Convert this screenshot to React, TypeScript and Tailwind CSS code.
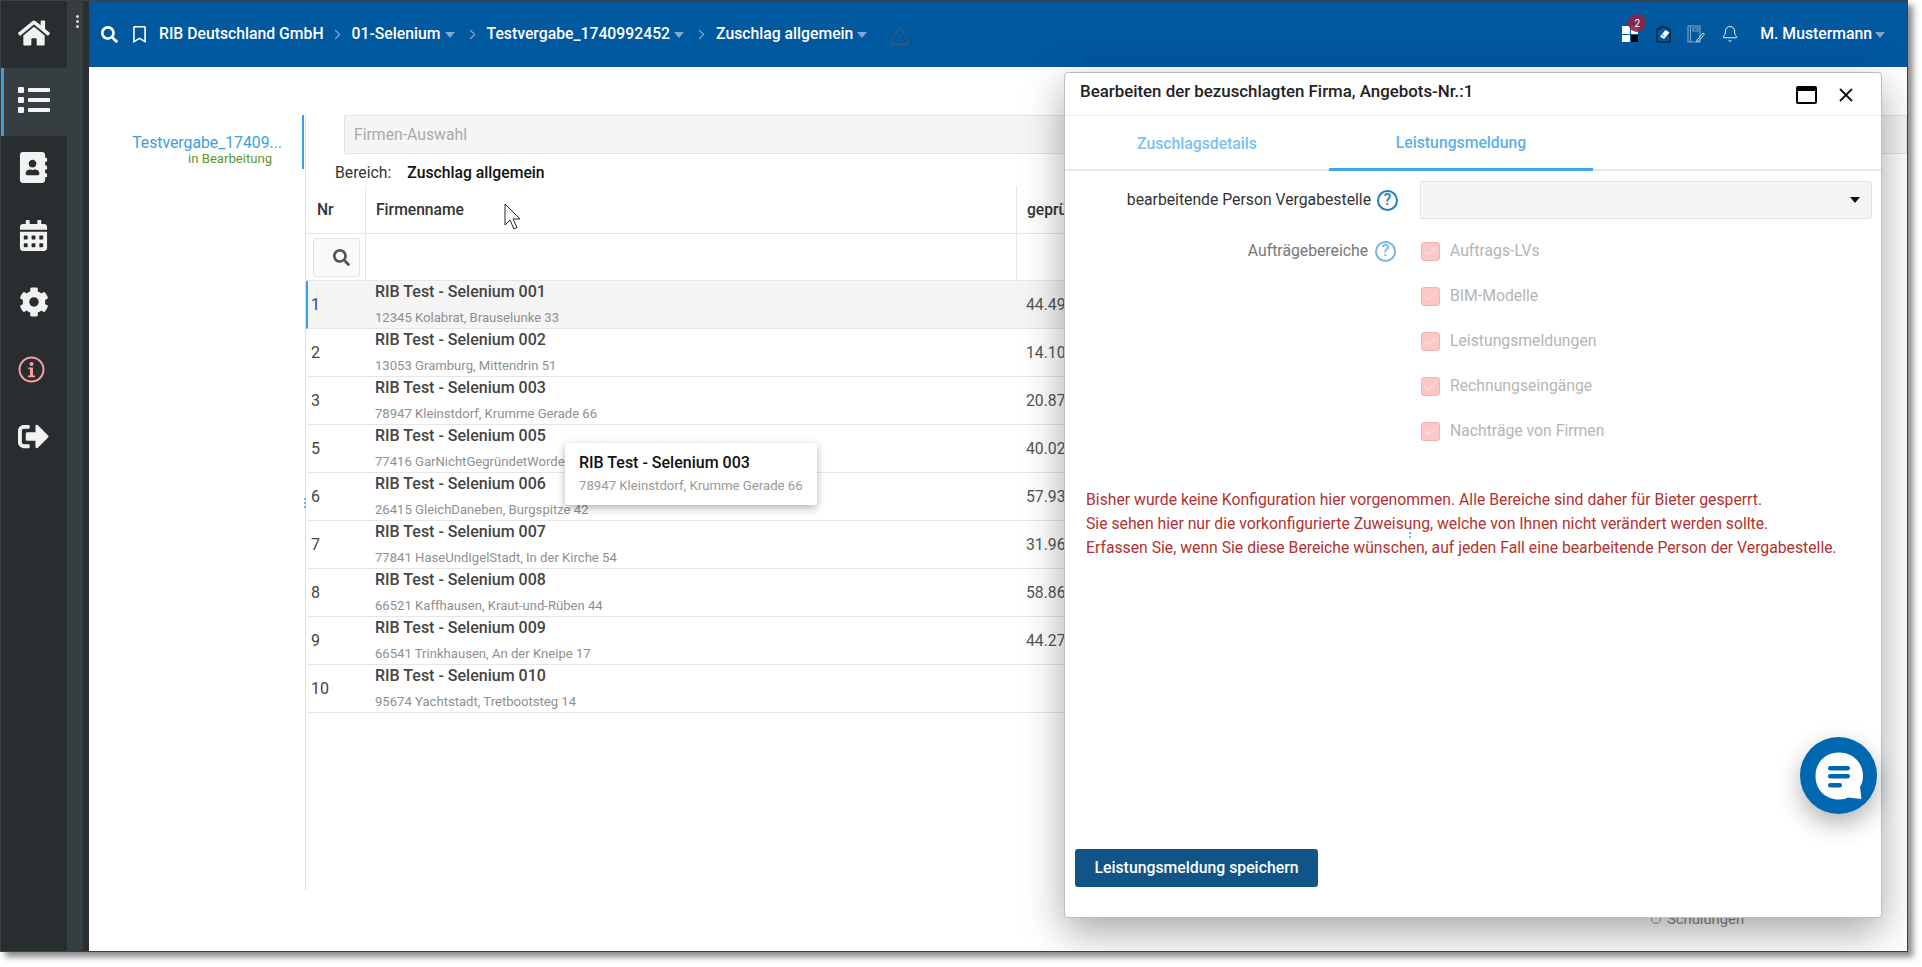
import React from "react";
import { FaHome, FaList, FaAddressBook, FaCalendarAlt, FaCog, FaSignOutAlt, FaSearch, FaRegBookmark } from "react-icons/fa";
import { Bell, TriangleAlert, X, ChevronRight, Check } from "lucide-react";

const rows = [
  ["1", "RIB Test - Selenium 001", "12345 Kolabrat, Brauselunke 33", "44.49"],
  ["2", "RIB Test - Selenium 002", "13053 Gramburg, Mittendrin 51", "14.10"],
  ["3", "RIB Test - Selenium 003", "78947 Kleinstdorf, Krumme Gerade 66", "20.87"],
  ["5", "RIB Test - Selenium 005", "77416 GarNichtGegründetWorde", "40.02"],
  ["6", "RIB Test - Selenium 006", "26415 GleichDaneben, Burgspitze 42", "57.93"],
  ["7", "RIB Test - Selenium 007", "77841 HaseUndIgelStadt, In der Kirche 54", "31.96"],
  ["8", "RIB Test - Selenium 008", "66521 Kaffhausen, Kraut-und-Rüben 44", "58.86"],
  ["9", "RIB Test - Selenium 009", "66541 Trinkhausen, An der Kneipe 17", "44.27"],
  ["10", "RIB Test - Selenium 010", "95674 Yachtstadt, Tretbootsteg 14", ""],
];

const checks = ["Auftrags-LVs", "BIM-Modelle", "Leistungsmeldungen", "Rechnungseingänge", "Nachträge von Firmen"];

function Caret({ className = "" }: { className?: string }) {
  return (
    <svg width="10" height="6" viewBox="0 0 10 6" className={className}>
      <path d="M0 0h10L5 6z" fill="#7fa9cc" />
    </svg>
  );
}

function Sep({ className = "" }: { className?: string }) {
  return <ChevronRight size={17} strokeWidth={1.5} color="#7fa9cc" className={className} />;
}

function Help({ faded = false }: { faded?: boolean }) {
  return (
    <div
      className={`flex h-[21px] w-[21px] shrink-0 items-center justify-center rounded-full border-2 text-[16px] font-medium leading-none ${
        faded ? "border-[#7db5dc] text-[#7db5dc]" : "border-[#1f7fc0] text-[#1f7fc0]"
      }`}
    >
      ?
    </div>
  );
}

function Dots({ className = "" }: { className?: string }) {
  return (
    <div className={`absolute flex flex-col gap-[2px] ${className}`}>
      <span className="h-[2px] w-[2px] rounded-full bg-[#3aa0ea]" />
      <span className="h-[2px] w-[2px] rounded-full bg-[#3aa0ea]" />
      <span className="h-[2px] w-[2px] rounded-full bg-[#3aa0ea]" />
    </div>
  );
}

function RailItem({ children, active = false }: { children: React.ReactNode; active?: boolean }) {
  return (
    <div
      className={`flex h-[67.3px] items-center justify-center pb-[3px] ${
        active ? "border-l-[3px] border-[#3aa0dc] bg-[#373e42] pr-[4px]" : "pr-[1px]"
      }`}
    >
      {children}
    </div>
  );
}

function Rail() {
  return (
    <aside className="flex w-[88px] shrink-0 bg-[#282d30] text-[#f2f2f2]">
      <div className="w-[66px] shrink-0">
        <RailItem><FaHome size={32} /></RailItem>
        <RailItem active><FaList size={32} /></RailItem>
        <RailItem><FaAddressBook size={31} /></RailItem>
        <RailItem><FaCalendarAlt size={31} /></RailItem>
        <RailItem><FaCog size={30} /></RailItem>
        <RailItem>
          <svg width="27" height="27" viewBox="0 0 27 27" className="mr-[4px]">
            <circle cx="13.5" cy="13.5" r="12" fill="none" stroke="#f8a0a0" strokeWidth="2" />
            <circle cx="13.5" cy="8" r="2" fill="#f8a0a0" />
            <path d="M10.5 11.5h4.5v8h2v1.8h-7v-1.8h2v-6.2h-1.5z" fill="#f8a0a0" />
          </svg>
        </RailItem>
        <RailItem><FaSignOutAlt size={31} /></RailItem>
      </div>
      <div className="flex w-[16px] shrink-0 flex-col items-center gap-[2px] bg-[#373e42] pl-[5px] pt-[14px]">
        <span className="h-[3px] w-[3px] rounded-full bg-[#d8d8d8]" />
        <span className="h-[3px] w-[3px] rounded-full bg-[#d8d8d8]" />
        <span className="h-[3px] w-[3px] rounded-full bg-[#d8d8d8]" />
      </div>
      <div className="w-[6px] shrink-0 bg-[#2b2f33]" />
    </aside>
  );
}

function Header() {
  return (
    <header className="flex h-[66px] shrink-0 items-center bg-[#00589f] text-[15.75px] font-medium text-white">
      <FaSearch size={17} className="ml-[12px]" />
      <FaRegBookmark size={17} className="ml-[13px]" />
      <span className="ml-[11px]">RIB Deutschland GmbH</span>
      <Sep className="ml-[5px]" />
      <span className="ml-[6px]">01-Selenium</span>
      <Caret className="ml-[4px] mt-[2px]" />
      <Sep className="ml-[9px]" />
      <span className="ml-[6px]">Testvergabe_1740992452</span>
      <Caret className="ml-[4px] mt-[2px]" />
      <Sep className="ml-[9px]" />
      <span className="ml-[6px]">Zuschlag allgemein</span>
      <Caret className="ml-[4px] mt-[2px]" />
      <TriangleAlert size={21} strokeWidth={1.5} color="#3b5a78" className="ml-[22px] mt-[4px]" />
      <div className="ml-auto flex items-center">
        <div className="relative h-[16px] w-[16px]">
          <div className="grid h-[16px] w-[16px] grid-cols-2 gap-px">
            <span className="bg-white" />
            <span className="bg-white" />
            <span className="bg-white" />
            <span className="bg-black" />
          </div>
          <span className="absolute left-[6px] top-[-12px] flex h-[18px] w-[18px] items-center justify-center rounded-full bg-[#8f2347]/90 text-[10px] font-normal text-white">
            2
          </span>
        </div>
        <svg width="16" height="18" viewBox="0 0 16 18" className="ml-[18px]">
          <path d="M1 4h3V2.500h1.500C6 1 9 1 9.500 2.500H11V4h3v13H1z" fill="none" stroke="#12263a" strokeWidth="1.5" />
          <path d="M9.500 5l4 2.500L8 14l-4-2.500z" fill="#fff" />
          <path d="M6 9.500l2 2" stroke="#00589f" strokeWidth="1" />
        </svg>
        <svg width="18" height="18" viewBox="0 0 18 18" className="ml-[15px]">
          <path d="M1 1h12v16H1zM3.500 1v16M6 3h5v3H6z" fill="none" stroke="#7fa9cc" strokeWidth="1.1" />
          <path d="M10 15l6-7 1.500 1.200-6 7-2 .5z" fill="none" stroke="#c4d8ea" strokeWidth="1" />
        </svg>
        <Bell size={18} strokeWidth={1.25} className="ml-[16px]" />
        <span className="ml-[21px]">M. Mustermann</span>
        <Caret className="ml-[3px] mr-[22px] mt-[2px]" />
      </div>
    </header>
  );
}

function Table() {
  return (
    <div className="w-[1100px]">
      <div className="flex h-[48px] border-b border-[#e6e6e6] text-[15.65px] font-medium text-[#333]">
        <div className="flex w-[60px] items-center border-r border-[#e6e6e6] pl-[11px]">Nr</div>
        <div className="flex w-[651px] items-center border-r border-[#e6e6e6] pl-[10px]">Firmenname</div>
        <div className="flex items-center pl-[10px]">geprüft</div>
      </div>
      <div className="flex h-[47px] border-b border-[#e6e6e6]">
        <div className="flex w-[60px] items-center border-r border-[#e6e6e6] pl-[7px]">
          <div className="flex h-[39px] w-[47px] items-center justify-end rounded-[3px] border border-[#e3e3e3] bg-[#fafafa] pr-[9px] text-[#555]">
            <FaSearch size={17} />
          </div>
        </div>
        <div className="w-[651px] border-r border-[#e6e6e6]" />
      </div>
      {rows.map((r, i) => (
        <div
          key={r[0]}
          className={`flex h-[48px] border-b border-[#e6e6e6] ${i === 0 ? "border-l-2 border-l-[#3aa0ea] bg-[#f5f5f5]" : "border-l-2 border-l-transparent"}`}
        >
          <div className="flex w-[67px] shrink-0 items-center pl-[3px] text-[16px] text-[#444]">{r[0]}</div>
          <div className="flex w-[651px] shrink-0 flex-col justify-between pb-[2px] pt-[1px]">
            <div className="text-[16px] font-medium leading-[20px] text-[#444]">{r[1]}</div>
            <div className="text-[13.1px] leading-[16px] text-[#8f8f8f]">{r[2]}</div>
          </div>
          <div className="flex items-center text-[15.75px] text-[#555]">{r[3]}</div>
        </div>
      ))}
    </div>
  );
}

function Dialog() {
  return (
    <div className="absolute left-[1063px] top-[71px] flex h-[846px] w-[818px] flex-col rounded-[4px] border border-[#bdbdbd] bg-white text-[15.75px] shadow-[0_14px_40px_rgba(0,0,0,0.35)]">
      <div className="flex h-[43px] shrink-0 items-center border-b border-[#f0f0f0] pl-[15px] pr-[24px] font-medium text-[#222]">
        <span className="-mt-[5px] text-[16.85px]">Bearbeiten der bezuschlagten Firma, Angebots-Nr.:1</span>
        <div className="ml-auto mt-[2px] flex items-center">
          <div className="h-[18px] w-[21px] rounded-[2px] border-2 border-t-[5px] border-black" />
          <X size={22} strokeWidth={2} color="#111" className="ml-[18px]" />
        </div>
      </div>
      <div className="flex h-[55px] shrink-0 border-b-2 border-[#e8e8e8] font-medium">
        <div className="flex w-[264px] items-center justify-center pt-[2px] text-[#7cc0f2]">Zuschlagsdetails</div>
        <div className="-mb-[2px] flex w-[264px] items-center justify-center border-b-[3px] border-[#3ea6e6] pt-[2px] text-[#5cb0ec]">
          Leistungsmeldung
        </div>
      </div>
      <div className="flex items-center pt-[10px] text-[#333]">
        <span className="w-[306px] text-right">bearbeitende Person Vergabestelle</span>
        <span className="ml-[6px]"><Help /></span>
        <div className="ml-[22px] flex h-[38px] w-[452px] items-center justify-end rounded-[2px] border border-[#e3e3e3] bg-[#f5f5f5] pr-[11px]">
          <svg width="10" height="6" viewBox="0 0 10 6"><path d="M0 0h10L5 6z" fill="#111" /></svg>
        </div>
      </div>
      <div className="mt-[22px] flex">
        <div className="flex h-[20px] w-[356px] shrink-0 items-center justify-end">
          <span className="text-[#777]">Aufträgebereiche</span>
          <span className="ml-[7px] mr-[25px]"><Help faded /></span>
        </div>
        <div className="flex flex-col gap-[25px]">
          {checks.map((c) => (
            <div key={c} className="flex h-[20px] items-center">
              <div className="flex h-[19px] w-[19px] items-center justify-center rounded-[3px] border border-[#efb4b4] bg-[#ffc6c6]">
                <Check size={15} strokeWidth={2} color="#e9e9e9" />
              </div>
              <span className="ml-[10px] text-[#b5b5b5]">{c}</span>
            </div>
          ))}
        </div>
      </div>
      <div className="relative mt-[47px] pl-[21px] leading-[24px] text-[#b3312f]">
        <p>Bisher wurde keine Konfiguration hier vorgenommen. Alle Bereiche sind daher für Bieter gesperrt.</p>
        <p>Sie sehen hier nur die vorkonfigurierte Zuweisung, welche von Ihnen nicht verändert werden sollte.</p>
        <p>Erfassen Sie, wenn Sie diese Bereiche wünschen, auf jeden Fall eine bearbeitende Person der Vergabestelle.</p>
        <Dots className="left-[344px] top-[40px]" />
      </div>
      <button className="mb-[30px] ml-[10px] mt-auto flex h-[38px] w-[243px] items-center justify-center rounded-[3px] bg-[#115588] text-[15.8px] font-medium text-white">
        Leistungsmeldung speichern
      </button>
    </div>
  );
}

export default function App() {
  return (
    <div className="relative h-[967px] w-[1922px] overflow-hidden bg-white font-['Roboto',sans-serif]">
      <div className="h-[952px] w-[1908px] border border-[#3c4044] shadow-[5px_5px_6px_rgba(0,0,0,0.45)]">
        <div className="relative flex h-full w-full overflow-hidden bg-white">
          <Rail />
          <div className="flex min-w-0 flex-1 flex-col">
            <Header />
            <main className="flex flex-1">
              <div className="mt-[48px] h-[775px] w-[217px] shrink-0 border-r border-[#e0e0e0]">
                <div className="mr-px flex h-[54px] flex-col items-end border-r-2 border-[#3aa0e6] pr-[20px] pt-[18px]">
                  <div className="text-[15.75px] leading-[20px] text-[#3b9fe0]">Testvergabe_17409...</div>
                  <div className="-mt-px pr-[10px] text-[13.1px] leading-[14px] text-[#5a9a30]">in Bearbeitung</div>
                </div>
              </div>
              <div className="min-w-0 flex-1 pt-[48px]">
                <div className="ml-[38px] flex h-[39px] items-center rounded-[2px] border border-[#e3e3e3] bg-[#f5f5f5] pl-[9px] text-[15.75px] text-[#aaa]">
                  Firmen-Auswahl
                </div>
                <div className="flex h-[32px] items-center pl-[29px] pt-[5px] text-[15.75px] text-[#333]">
                  <span>Bereich:</span>
                  <span className="ml-[16px] font-medium text-[#111]">Zuschlag allgemein</span>
                </div>
                <Table />
              </div>
            </main>
          </div>

          <Dots className="left-[303px] top-[497px]" />

          <div className="absolute left-[1650px] top-[907px] flex items-center text-[14.8px] text-[#888]">
            <span className="h-[10px] w-[10px] rounded-full border border-[#999]" />
            <span className="ml-[6px]">Schulungen</span>
          </div>

          <div className="absolute left-[564px] top-[442px] h-[62px] w-[252px] rounded-[3px] bg-white pl-[14px] pt-[10px] shadow-[0_3px_8px_rgba(0,0,0,0.3)]">
            <div className="text-[16px] font-medium leading-[20px] text-[#111]">RIB Test - Selenium 003</div>
            <div className="mt-[5px] text-[13.2px] leading-[16px] text-[#999]">78947 Kleinstdorf, Krumme Gerade 66</div>
          </div>

          <svg width="20" height="28" viewBox="0 0 20 28" className="absolute left-[503px] top-[202px]">
            <path d="M1 1v21l5-5 4 9 3-1.500-4-8.500h7z" fill="#fff" stroke="#222" strokeWidth="1" />
          </svg>

          <Dialog />

          <div className="absolute left-[1799px] top-[736px] flex h-[77px] w-[77px] items-center justify-center rounded-full bg-[#0068b0] shadow-[0_10px_24px_rgba(0,0,0,0.3)]">
            <svg width="48" height="48" viewBox="0 0 48 48">
              <path d="M24 .5C10.500.5 .5 10 .5 24s10 23.500 23.500 23.500c4 0 7-1 9-2l13.500 1.500-1.500-12c2-3.500 3-7 3-11C48 10 37.500.5 24 .5z" fill="#fff" />
              <rect x="13" y="14" width="22" height="4.500" rx="2.250" fill="#0068b0" />
              <rect x="13" y="22" width="22" height="4.500" rx="2.250" fill="#0068b0" />
              <rect x="13" y="31" width="14" height="4.500" rx="2.250" fill="#0068b0" />
            </svg>
          </div>
        </div>
      </div>
    </div>
  );
}
